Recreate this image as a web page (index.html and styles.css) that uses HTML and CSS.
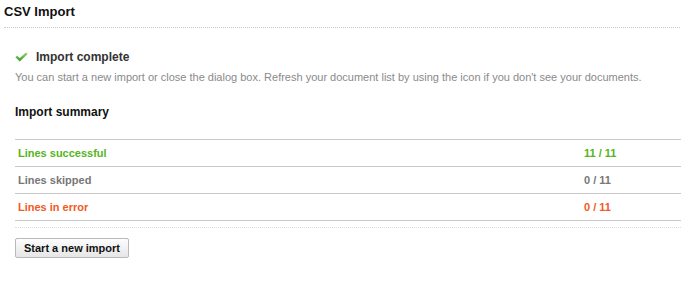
FILE: index.html
```html
<!DOCTYPE html>
<html>
<head>
<meta charset="utf-8" />
<title>CSV Import</title>
<link rel="stylesheet" href="styles.css">
</head>
<body>
<div class="dialog">
  <div class="dialog-head"><h1>CSV Import</h1></div>
  <div class="dialog-body">
    <div class="status">
      <svg class="check" width="13" height="10" viewBox="0 0 13 10">
        <defs>
          <linearGradient id="g" x1="0" y1="0" x2="0" y2="1">
            <stop offset="0" stop-color="#86d86f" />
            <stop offset="1" stop-color="#3a9a2a" />
          </linearGradient>
        </defs>
        <path d="M0.4 5.2 L2.1 3.7 L4.8 6 L11 0.4 L12.6 1.9 L4.8 9.4 Z" fill="url(#g)" />
      </svg>
      <span>Import complete</span>
    </div>
    <p class="hint">You can start a new import or close the dialog box. Refresh your document list by using the icon if you don't see your documents.</p>
    <h2>Import summary</h2>
    <table class="summary">
      <tr class="ok"><td>Lines successful</td><td class="num">11 / 11</td></tr>
      <tr class="skip"><td>Lines skipped</td><td class="num">0 / 11</td></tr>
      <tr class="err"><td>Lines in error</td><td class="num">0 / 11</td></tr>
    </table>
    <div class="actions">
      <button type="button" class="btn">Start a new import</button>
    </div>
  </div>
</div>
</body>
</html>
```

FILE: styles.css
```css
/* import dialog */
body {margin: 0; background: #fff; font-family: "Liberation Sans", Arial, sans-serif; color: #222;}
.dialog-head {margin: 0 2px 0 4px; height: 27px; border-bottom: 1px dotted #c8c8c8;}
.dialog-head h1 {margin: 0; padding-top: 4px; font-size: 13px; line-height: 16px; font-weight: bold; color: #111;}

.dialog-body {padding: 0 1px 0 15px;}
.status {display: flex; align-items: center; height: 16px; margin-top: 21px;}
.status .check {margin-right: 8px;}
.status span {font-size: 12px; font-weight: bold; color: #333;}
.hint {margin: 6px 0 0; font-size: 11px; line-height: 13px; color: #8a8a8a;}

h2 {margin: 21px 0 0; font-size: 12px; line-height: 15px; font-weight: bold; color: #111;}

.summary {width: 100%; margin-top: 19px; border-collapse: collapse; font-size: 11px; font-weight: bold;}
.summary td {height: 26px; padding: 0 0 0 3px; border-top: 1px solid #c8c8c8; border-bottom: 1px solid #c8c8c8;}
.summary td.num {width: 97px; padding-left: 0;}
.summary .ok td {color: #55b520;}
.summary .skip td {color: #777;}
.summary .err td {color: #f25a26;}

.actions {margin-top: 6px; padding-top: 10px; border-top: 1px dotted #ddd;}
.btn {height: 20px; padding: 0 8px; font-family: "Liberation Sans", Arial, sans-serif; font-size: 11px; font-weight: bold; color: #111;
  border: 1px solid #b9b9b9; border-radius: 2px; background: linear-gradient(#fdfdfd, #e6e6e6);}
```
